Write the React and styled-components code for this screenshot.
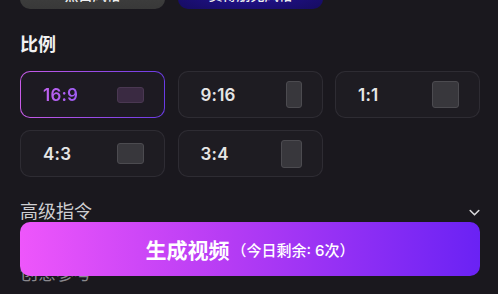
import React from "react";
import styled, { createGlobalStyle } from "styled-components";

const Global = createGlobalStyle`
  html, body { margin: 0; padding: 0; background: #1a181e; }
  body { font-family: "Inter", "Noto Sans CJK SC", sans-serif; overflow: hidden; }
`;

const Screen = styled.div`
  position: relative;
  width: 498px;
  height: 294px;
  overflow: hidden;
  background: #1a181e;
`;

const Content = styled.div`
  display: flex;
  flex-direction: column;
  padding: 0 20px;
  margin-top: -31px;
`;

const StyleRow = styled.div`
  display: flex;
  gap: 13px;
`;

const StyleButton = styled.div`
  width: 145px;
  height: 40px;
  box-sizing: border-box;
  border-radius: 10px;
  display: flex;
  align-items: flex-end;
  justify-content: center;
  padding-bottom: 5px;
  color: #eee;
  font-size: 14px;
  font-weight: 500;
  line-height: 18px;
  background: ${(p) =>
    p.$variant === "blue"
      ? "radial-gradient(ellipse at 50% 40%, #2a17a8 0%, #1c0f7a 60%, #160c60 100%)"
      : "linear-gradient(180deg, #4a4a4a, #383838)"};
`;

const Heading = styled.div`
  margin-top: 25px;
  font-size: 18px;
  font-weight: 700;
  line-height: 22px;
  color: #f2f2f2;
`;

const Grid = styled.div`
  margin-top: 15px;
  display: grid;
  grid-template-columns: repeat(3, 145px);
  column-gap: 12.5px;
  row-gap: 12px;
`;

const Card = styled.div`
  height: 47px;
  box-sizing: border-box;
  border-radius: 10px;
  display: flex;
  align-items: center;
  justify-content: space-between;
  padding: 0 20px 0 22px;
  border: ${(p) => (p.$active ? "1.5px" : "1px")} solid transparent;
  background: ${(p) =>
    p.$active
      ? "linear-gradient(#1d1a22, #1d1a22) padding-box, linear-gradient(90deg, #c85ce8, #6a3be4) border-box"
      : "linear-gradient(#1e1c22, #1e1c22) padding-box, linear-gradient(#2e2c33, #2e2c33) border-box"};
`;

const Label = styled.span`
  font-size: 17px;
  font-weight: 600;
  letter-spacing: 0.2px;
  color: #e6e6e6;
  ${(p) =>
    p.$active &&
    `background: linear-gradient(90deg, #c062ee, #9e5cf3); -webkit-background-clip: text; background-clip: text; color: transparent;`}
`;

const Shape = styled.div`
  box-sizing: border-box;
  width: ${(p) => p.$w}px;
  height: ${(p) => p.$h}px;
  border-radius: 3px;
  background: ${(p) => (p.$active ? "#3a2a42" : "#38373c")};
  border: 1px solid ${(p) => (p.$active ? "#4a3852" : "#4c4b50")};
`;

const Advanced = styled.div`
  margin-top: 24px;
  display: flex;
  align-items: center;
  justify-content: space-between;
  font-size: 18px;
  line-height: 22px;
  color: #cfcfd2;
`;

const Chevron = styled.svg`
  width: 11px;
  height: 8px;
  margin-right: -2px;
  margin-top: 2px;
`;

const Sub = styled.div`
  margin-top: 40px;
  font-size: 18px;
  line-height: 22px;
  color: #8a898e;
`;

const GenerateButton = styled.button`
  position: absolute;
  left: 20px;
  top: 222px;
  width: 460px;
  height: 54px;
  border: none;
  border-radius: 10px;
  background: linear-gradient(90deg, #ee56fb 0%, #b63cf4 45%, #6a22f4 100%);
  color: #fff;
  display: flex;
  align-items: center;
  justify-content: center;
  font-family: "Inter", "Noto Sans CJK SC", sans-serif;
  cursor: pointer;
`;

const BtnMain = styled.span`
  font-size: 21px;
  font-weight: 700;
`;

const BtnSub = styled.span`
  font-size: 15px;
  font-weight: 500;
  margin-left: 2px;
`;

const ratios = [
  { label: "16:9", w: 27, h: 16, active: true },
  { label: "9:16", w: 16, h: 27 },
  { label: "1:1", w: 27, h: 27 },
  { label: "4:3", w: 27, h: 21 },
  { label: "3:4", w: 21, h: 28 },
];

export default function App() {
  return (
    <Screen>
      <Global />
      <Content>
        <StyleRow>
          <StyleButton>黑白风格</StyleButton>
          <StyleButton $variant="blue">赛博朋克风格</StyleButton>
        </StyleRow>
        <Heading>比例</Heading>
        <Grid>
          {ratios.map((r) => (
            <Card key={r.label} $active={r.active}>
              <Label $active={r.active}>{r.label}</Label>
              <Shape $w={r.w} $h={r.h} $active={r.active} />
            </Card>
          ))}
        </Grid>
        <Advanced>
          <span>高级指令</span>
          <Chevron viewBox="0 0 11 8">
            <path d="M1.2 1.5 L5.5 5.8 L9.8 1.5" fill="none" stroke="#d8d8db" strokeWidth="1.6" strokeLinecap="round" strokeLinejoin="round" />
          </Chevron>
        </Advanced>
        <Sub>创意参考</Sub>
      </Content>
      <GenerateButton>
        <BtnMain>生成视频</BtnMain>
        <BtnSub>（今日剩余: 6次）</BtnSub>
      </GenerateButton>
    </Screen>
  );
}
